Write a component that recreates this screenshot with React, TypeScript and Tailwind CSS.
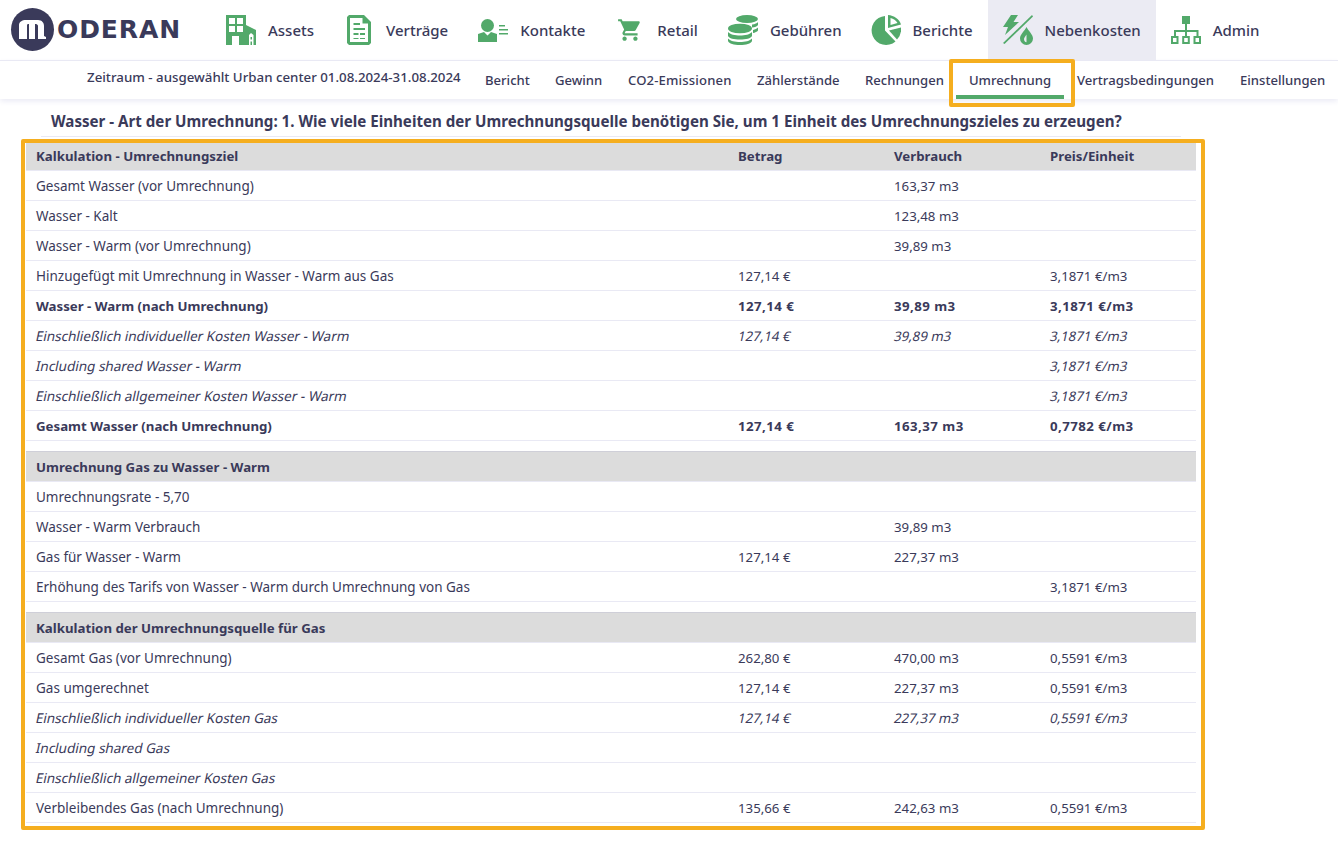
import React from 'react';

const GREEN = '#52a96a';

const IconAssets = () => (
  <svg width="30" height="30" viewBox="0 0 30 30" fill={GREEN}>
    <path fillRule="evenodd" d="M0 0h20v30H0zM3 3v6h6V3zm8 0v6h6V3zM3 11v6h6v-6zm8 0v6h6v-6zM6 21v9h7v-9z" />
    <path fillRule="evenodd" d="M20 10l10 5v15H20zm3 20h1.500v-3.500h1.500V30h1.500V20L25 18l-2 2zm1.500-8h1.500v2.500h-1.500z" />
  </svg>
);

const IconDoc = () => (
  <svg width="24" height="30" viewBox="0 0 24 30">
    <path fill={GREEN} d="M2 0h15l7 7v21l-2 2H2l-2-2V2z" />
    <path fill="#fff" d="M3 3h12.500v5.500H21V27H3z" />
    <path fill={GREEN} d="M6.500 8h6.500v2H6.500zM6.500 13h11.500v2H6.500zM6.500 18h5v2h-5zM13 18h5v2h-5zM6.500 23h5v1h-5zM13 23h5v1h-5z" />
  </svg>
);

const IconContact = () => (
  <svg width="30" height="23" viewBox="0 0 30 23" fill={GREEN}>
    <circle cx="9.500" cy="6.500" r="6.500" />
    <path d="M0 23v-8l6-2 3.500 3.500L13 13l6 2v8z" />
    <path d="M21 6h6v1.500h-6zM21 10h9v1.500h-9zM21 14h9v1.500h-9z" />
  </svg>
);

const IconCart = () => (
  <svg width="26" height="26" viewBox="0 0 24 24" fill={GREEN}>
    <path d="M7 18c-1.100 0-1.990.9-1.990 2S5.900 22 7 22s2-.9 2-2-.9-2-2-2zM1 2v2h2l3.600 7.590-1.350 2.450c-.16.28-.25.61-.25.96 0 1.100.9 2 2 2h12v-2H7.420c-.14 0-.25-.11-.25-.25l.03-.12.9-1.630h7.450c.75 0 1.410-.41 1.750-1.030l3.580-6.490c.08-.14.12-.31.12-.48 0-.55-.45-1-1-1H5.210l-.94-2H1zm16 16c-1.100 0-1.990.9-1.990 2s.89 2 1.990 2 2-.9 2-2-.9-2-2-2z" />
  </svg>
);

const IconCoins = () => (
  <svg width="30" height="30" viewBox="0 0 30 30" fill={GREEN}>
    <ellipse cx="19" cy="4" rx="11" ry="4" />
    <path d="M24 9.500c3-.3 5-1.200 6-2.500v3c-1 1.500-3 2.300-6 2.600zM25 15c2-.4 4-1.300 5-2.500v3c-1 1.300-3 2.200-5 2.500z" />
    <ellipse cx="12" cy="13.500" rx="12" ry="4.800" />
    <path d="M0 17c2 2.500 7 3.500 12 3.500S22 19.500 24 17v4c-1 2.500-6 3.500-12 3.500S1 23.500 0 21zM0 23.500c2 2.500 7 3.500 12 3.500s10-1 12-3.500V26c-1 2.700-6 4-12 4S1 28.700 0 26z" />
  </svg>
);

const IconPie = () => (
  <svg width="30" height="30" viewBox="0 0 30 30" fill={GREEN}>
    <path d="M14 1v14.500l10.500 11A14.500 14.500 0 1 1 14 1z" />
    <path d="M18 15.500L30 12.500A15 15 0 0 1 26 24.500z" />
    <path fillRule="evenodd" d="M17 0C23 .5 28.500 4 30 9.500L17 13zm2.500 3v7l7-2C25 5.500 22.500 3.500 19.500 3z" />
  </svg>
);

const IconUtility = () => (
  <svg width="30" height="30" viewBox="0 0 30 30" fill={GREEN}>
    <path d="M29 0l1 1.500L1.500 29 0 28z" />
    <path d="M8 0h7l-4.500 7H16L2 20l3-8H0z" />
    <path fillRule="evenodd" d="M23.500 12c2 4 6.500 7.500 6.500 11.500a6.500 6.500 0 0 1-13 0c0-4 4.500-7.500 6.500-11.500zm0 7.500c-1 2-2.500 3-2.500 4.500 0 2 1 3 2.500 3.300z" />
  </svg>
);

const IconOrg = () => (
  <svg width="30" height="28" viewBox="0 0 30 28" fill={GREEN}>
    <path d="M11 0h8v8h-8z" />
    <path d="M14 8h2v6h11.500v6h-2v-4H16v4h-2v-4H5v4H3v-6h11z" />
    <path fillRule="evenodd" d="M0 20h7.500v8H0zm2 2v4h3.500v-4zM11.200 20h7.600v8h-7.600zm2 2v4h3.600v-4zM22.500 20H30v8h-7.500zm2 2v4H28v-4z" />
  </svg>
);

const navItems = [
  { label: 'Assets', icon: <IconAssets />, pad: 'px-[15px]' },
  { label: 'Verträge', icon: <IconDoc />, pad: 'px-[15px]' },
  { label: 'Kontakte', icon: <IconContact />, pad: 'px-[15px]' },
  { label: 'Retail', icon: <IconCart />, pad: 'px-[15px]' },
  { label: 'Gebühren', icon: <IconCoins />, pad: 'pl-[15px] pr-[14px]' },
  { label: 'Berichte', icon: <IconPie />, pad: 'px-[15px]' },
  { label: 'Nebenkosten', icon: <IconUtility />, pad: 'px-[15px] bg-[#ebebf3]' },
  { label: 'Admin', icon: <IconOrg />, pad: 'px-[15px]' },
];

const subItems = [
  { label: 'Bericht', w: 'w-[70px]' },
  { label: 'Gewinn', w: 'w-[73px]' },
  { label: 'CO2-Emissionen', w: 'w-[129px] tracking-[0.15px]' },
  { label: 'Zählerstände', w: 'w-[108px]' },
  { label: 'Rechnungen', w: 'w-[103px]' },
];

type Row = { cells: string[]; kind?: 'head' | 'bold' | 'italic' };

const sections: Row[][] = [
  [
    { cells: ['Kalkulation - Umrechnungsziel', 'Betrag', 'Verbrauch', 'Preis/Einheit'], kind: 'head' },
    { cells: ['Gesamt Wasser (vor Umrechnung)', '', '163,37 m3', ''] },
    { cells: ['Wasser - Kalt', '', '123,48 m3', ''] },
    { cells: ['Wasser - Warm (vor Umrechnung)', '', '39,89 m3', ''] },
    { cells: ['Hinzugefügt mit Umrechnung in Wasser - Warm aus Gas', '127,14 €', '', '3,1871 €/m3'] },
    { cells: ['Wasser - Warm (nach Umrechnung)', '127,14 €', '39,89 m3', '3,1871 €/m3'], kind: 'bold' },
    { cells: ['Einschließlich individueller Kosten Wasser - Warm', '127,14 €', '39,89 m3', '3,1871 €/m3'], kind: 'italic' },
    { cells: ['Including shared Wasser - Warm', '', '', '3,1871 €/m3'], kind: 'italic' },
    { cells: ['Einschließlich allgemeiner Kosten Wasser - Warm', '', '', '3,1871 €/m3'], kind: 'italic' },
    { cells: ['Gesamt Wasser (nach Umrechnung)', '127,14 €', '163,37 m3', '0,7782 €/m3'], kind: 'bold' },
  ],
  [
    { cells: ['Umrechnung Gas zu Wasser - Warm', '', '', ''], kind: 'head' },
    { cells: ['Umrechnungsrate - 5,70', '', '', ''] },
    { cells: ['Wasser - Warm Verbrauch', '', '39,89 m3', ''] },
    { cells: ['Gas für Wasser - Warm', '127,14 €', '227,37 m3', ''] },
    { cells: ['Erhöhung des Tarifs von Wasser - Warm durch Umrechnung von Gas', '', '', '3,1871 €/m3'] },
  ],
  [
    { cells: ['Kalkulation der Umrechnungsquelle für Gas', '', '', ''], kind: 'head' },
    { cells: ['Gesamt Gas (vor Umrechnung)', '262,80 €', '470,00 m3', '0,5591 €/m3'] },
    { cells: ['Gas umgerechnet', '127,14 €', '227,37 m3', '0,5591 €/m3'] },
    { cells: ['Einschließlich individueller Kosten Gas', '127,14 €', '227,37 m3', '0,5591 €/m3'], kind: 'italic' },
    { cells: ['Including shared Gas', '', '', ''], kind: 'italic' },
    { cells: ['Einschließlich allgemeiner Kosten Gas', '', '', ''], kind: 'italic' },
    { cells: ['Verbleibendes Gas (nach Umrechnung)', '135,66 €', '242,63 m3', '0,5591 €/m3'] },
  ],
];

const rowStyle = (kind: Row['kind'], first: boolean) => {
  if (kind === 'head') {
    return first
      ? 'h-[28px] border-b border-[#e9e9f4] bg-[#dcdcdc] font-bold text-[13.25px]'
      : 'h-[31px] border-y border-t-[#cfcfd8] border-b-[#e9e9f4] bg-[#dcdcdc] pt-[2px] font-bold text-[13.25px]';
  }
  if (kind === 'bold') return 'h-[30px] border-b border-[#e9e9f4] pt-[3px] font-bold text-[13.25px]';
  return 'h-[30px] border-b border-[#e9e9f4] pt-[1px] font-normal text-[13.5px]';
};

const cellStyle = (kind: Row['kind'], c: number) => {
  if (c === 0) return 'pl-[10px] whitespace-nowrap';
  if (kind === 'bold') return 'tracking-[0.45px] whitespace-nowrap';
  if (kind === 'head') return 'whitespace-nowrap';
  return 'pt-[1px] text-[13.25px] whitespace-nowrap';
};

export default function App() {
  return (
    <div className="min-h-[844px] bg-white text-[#3a3a5a] [font-family:'Noto_Sans',sans-serif]">
      <header className="flex h-[61px] border-b border-[#e9e9f4] text-[15px] font-medium">
        <div className="flex w-[211px] items-center pb-[1px] pl-[11px]">
          <div className="flex h-[43px] w-[43px] items-center justify-center rounded-full bg-[#3a3a5a]">
            <svg width="27" height="19" viewBox="0 0 27 19" fill="#fff">
              <path d="M0 19V5C0 2 3 0 7 0h12c4 0 6 3 6 6v10l2 1v2H19V6c0-1-1-2-2-2h-1v15H10V4H9C8 4 8 5 8 6v13z" />
            </svg>
          </div>
          <span className="ml-[3px] text-[25px] font-bold leading-none tracking-[0.9px] [font-family:'DejaVu_Sans',sans-serif]">ODERAN</span>
        </div>
        <nav className="flex">
          {navItems.map((item) => (
            <div key={item.label} className={`flex h-[60px] items-center ${item.pad}`}>
              <div className="flex w-[30px] justify-center">{item.icon}</div>
              <span className="ml-[12px]">{item.label}</span>
            </div>
          ))}
        </nav>
      </header>

      <div className="flex h-[38px] items-stretch text-[13.1px] font-medium shadow-[0_2px_6px_#e9e9f4]">
        <div className="flex w-[473px] items-center pb-[4px] pl-[87px] text-[13.3px] whitespace-nowrap">Zeitraum - ausgewählt Urban center 01.08.2024-31.08.2024</div>
        {subItems.map((item) => (
          <span key={item.label} className={`flex items-center pl-[12px] pt-[2px] whitespace-nowrap ${item.w}`}>{item.label}</span>
        ))}
        <div className="relative flex w-[108px] items-center justify-center border-b-[4px] border-[#52a96a] pt-[6px] whitespace-nowrap">
          Umrechnung
          <div className="absolute -top-[2px] -left-[7px] -right-[11px] -bottom-[12px] rounded-[2px] border-[4px] border-[#f5ae1f]" />
        </div>
        <span className="flex w-[164px] items-center pl-[13px] pt-[2px] whitespace-nowrap">Vertragsbedingungen</span>
        <span className="flex items-center pl-[12px] pt-[2px] whitespace-nowrap">Einstellungen</span>
      </div>

      <div className="pl-[21px]">
        <div className="ml-[20px] mt-[6px] h-[32px] w-[1140px] border-b border-[#e9e9f4] pl-[10px] pt-[5px] text-[15.14px] font-bold whitespace-nowrap">
          Wasser - Art der Umrechnung: 1. Wie viele Einheiten der Umrechnungsquelle benötigen Sie, um 1 Einheit des Umrechnungszieles zu erzeugen?
        </div>
        <div className="mt-[2px] h-[691px] w-[1184px] rounded-[2px] border-[4px] border-[#f5ae1f] pl-[1px]">
          <div className="flex w-[1170px] flex-col gap-[10px]">
            {sections.map((rows, i) => (
              <div key={i}>
                {rows.map((row) => (
                  <div key={row.cells[0]} className={`grid grid-cols-[712px_156px_156px_146px] items-center ${rowStyle(row.kind, i === 0)}`}>
                    {row.cells.map((cell, c) => (
                      <span key={c} className={cellStyle(row.kind, c)}>
                        {row.kind === 'italic' ? <span className="inline-block -skew-x-12">{cell}</span> : cell}
                      </span>
                    ))}
                  </div>
                ))}
              </div>
            ))}
          </div>
        </div>
      </div>
    </div>
  );
}
